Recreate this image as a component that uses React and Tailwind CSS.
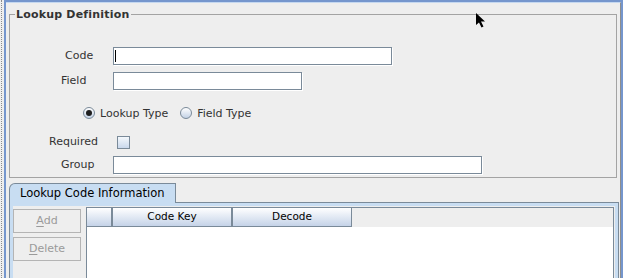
import React from 'react'

function TextField({ width, caret }) {
  return (
    <div className={`relative h-[18px] ${width} border border-[#7a8a99] bg-white shadow-[1px_1px_0_#ffffff]`}>
      {caret && <div className="absolute left-[1px] top-[2px] h-[12px] w-px bg-black" />}
    </div>
  )
}

function Radio({ checked, label, className = '' }) {
  return (
    <label className={`flex items-center ${className}`}>
      <span className="relative h-[12px] w-[12px] rounded-full border border-[#7a8a99] bg-linear-to-b from-white to-[#c3d2e6]">
        {checked && <span className="absolute left-[2px] top-[2px] h-[6px] w-[6px] rounded-full bg-[#1e1e1e]" />}
      </span>
      <span className="ml-[5px] leading-[13px]">{label}</span>
    </label>
  )
}

function HeaderCell({ width, children, edges }) {
  return (
    <div className={`flex ${width} items-center justify-center border-b ${edges} border-[#7a8a99] bg-linear-to-b from-white to-[#c5d3e8] text-[10.5px] text-black`}>
      {children}
    </div>
  )
}

function DisabledButton({ mnemonic, rest }) {
  return (
    <div className="flex h-[24px] w-[68px] items-center justify-center border border-[#b4b4b4] text-[#9a9a9a]">
      <span className="underline underline-offset-[2px]">{mnemonic}</span>{rest}
    </div>
  )
}

export default function App() {
  return (
    <div className="relative flex h-[278px] w-[623px] overflow-hidden bg-[#eeeeee] font-['DejaVu_Sans',sans-serif] text-[11px] text-[#333]">
      {/* dotted splitter edge */}
      <div className="w-[4px] shrink-0 pl-px">
        <div className="h-full border-l border-dotted border-[#8c8c8c]" />
      </div>

      {/* focused frame */}
      <div className="flex flex-1 flex-col border-l-2 border-r-2 border-t-2 border-[#7596cd]">
        <div className="flex flex-1 flex-col border-r border-t border-r-[#8e8e8e] border-t-[#c5d8f0]">
          <fieldset className="mx-[3px] mt-[5px] border border-[#a3a3a3] pb-[3px]">
            <legend className="ml-[5px] px-px text-[11px] font-bold leading-[13px] tracking-[0.2px] text-[#333]">
              Lookup Definition
            </legend>

            <div className="mt-[26px] flex h-[18px] items-center">
              <span className="w-[103px] pl-[55px]">Code</span>
              <TextField width="w-[279px]" caret />
            </div>

            <div className="mt-[7px] flex h-[18px] items-center">
              <span className="w-[103px] pl-[51px]">Field</span>
              <TextField width="w-[189px]" />
            </div>

            <div className="mt-[17px] flex h-[12px] items-center pl-[73px]">
              <Radio checked label="Lookup Type" />
              <Radio label="Field Type" className="ml-[12px]" />
            </div>

            <div className="mt-[17px] flex h-[13px] items-center">
              <span className="w-[107px] pl-[39px]">Required</span>
              <span className="h-[13px] w-[13px] border border-[#7a8a99] bg-linear-to-b from-[#f4f8fc] to-[#c9d8ec]" />
            </div>

            <div className="mt-[7px] flex h-[18px] items-center">
              <span className="w-[103px] pl-[51px]">Group</span>
              <TextField width="w-[369px]" />
            </div>
          </fieldset>

          {/* tab strip */}
          <div className="ml-[3px] mr-px mt-[5px] flex h-[20px]">
            <div className="flex w-[167px] items-center rounded-tl-[6px] border-l border-r border-t border-[#7a8a99] bg-[#c8ddf2] pl-[10px] text-[11.5px] text-black">
              Lookup Code Information
            </div>
            <div className="flex-1 border-b border-[#7a8a99]" />
          </div>

          {/* tab content */}
          <div className="ml-[3px] mr-px flex flex-1 border-l border-r border-[#7a8a99]">
            <div className="flex flex-1 border-l-[3px] border-r-[3px] border-t-[3px] border-[#c8ddf2]">
              <div className="mt-[3px] flex flex-col gap-[4px]">
                <DisabledButton mnemonic="A" rest="dd" />
                <DisabledButton mnemonic="D" rest="elete" />
              </div>

              <div className="ml-[5px] mr-px mt-px flex flex-1 flex-col border-l border-r border-t border-[#7a8a99] bg-white">
                <div className="flex h-[19px] bg-[#eeeeee]">
                  <HeaderCell width="w-[25px]" edges="border-r" />
                  <HeaderCell width="w-[120px]" edges="border-l border-r">Code Key</HeaderCell>
                  <HeaderCell width="w-[120px]" edges="border-l border-r">Decode</HeaderCell>
                </div>
                <div className="flex-1 bg-white" />
              </div>
            </div>
          </div>
        </div>
      </div>

      {/* mouse pointer */}
      <svg className="absolute left-[476px] top-[13px]" width="10" height="16" viewBox="0 0 10 16">
        <path d="M0 0 L0 12 L3 9.5 L5.5 14.5 L7.5 13.5 L5 8.5 L9 8.5 Z" fill="#000" />
      </svg>
    </div>
  )
}
